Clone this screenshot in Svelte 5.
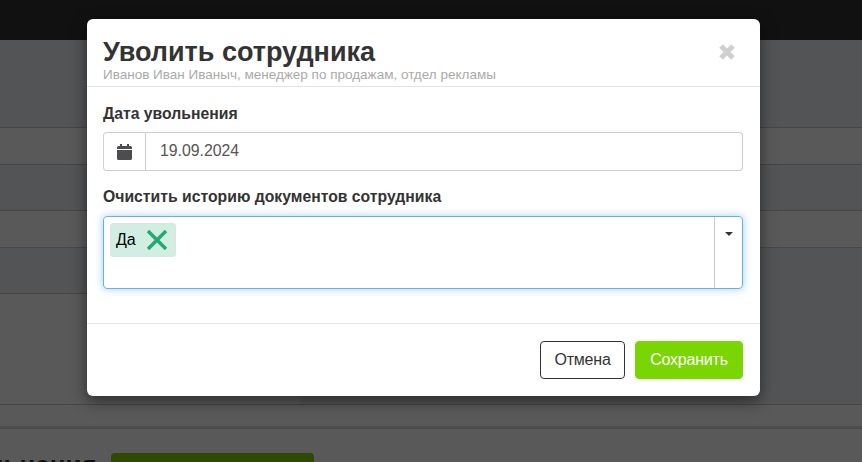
<script>
  let rows = [
    { height: 88, odd: false },
    { height: 37, odd: true },
    { height: 46, odd: false },
    { height: 37, odd: true },
    { height: 46, odd: false, split: true },
    { height: 111, odd: true, merged: true },
    { height: 24, odd: false, last: true }
  ];
  let date = $state('19.09.2024');
</script>

<div class="page">
  <div class="topbar"></div>
  <div class="rows">
    {#each rows as row}
      <div class="row" class:odd={row.odd} class:split={row.split} class:merged={row.merged} class:last={row.last} style="height: {row.height}px"></div>
    {/each}
  </div>
  <div class="section-head">
    <span class="section-title">Увольнения</span>
    <span class="section-btn"></span>
  </div>

  <div class="modal">
    <div class="modal-header">
      <h2>Уволить сотрудника</h2>
      <div class="subtitle">Иванов Иван Иваныч, менеджер по продажам, отдел рекламы</div>
      <span class="close">
        <svg width="18" height="18" viewBox="0 0 18 18"><path d="M3 3l12 12M15 3L3 15" stroke="#cfcfcf" stroke-width="5" fill="none"/></svg>
      </span>
    </div>
    <div class="modal-body">
      <div class="label">Дата увольнения</div>
      <div class="input-group">
        <span class="addon">
          <svg width="15" height="16" viewBox="0 0 15 16">
            <path fill="#4d4d4f" d="M0 6h15v8.500a1.500 1.500 0 0 1-1.500 1.500h-12A1.500 1.500 0 0 1 0 14.500zM1.500 2H3V0h2v2h5V0h2v2h1.500A1.500 1.500 0 0 1 15 3.500V5H0V3.500A1.500 1.500 0 0 1 1.500 2z"/>
          </svg>
        </span>
        <input class="date" bind:value={date} />
      </div>
      <div class="label second">Очистить историю документов сотрудника</div>
      <div class="select">
        <div class="values">
          <span class="tag">
            Да
            <svg width="22" height="22" viewBox="0 0 22 22"><path d="M2 2l18 18M20 2L2 20" stroke="#24a874" stroke-width="3.500" fill="none"/></svg>
          </span>
        </div>
        <div class="arrow"><span class="caret"></span></div>
      </div>
    </div>
    <div class="modal-footer">
      <button class="btn-cancel">Отмена</button>
      <button class="btn-save">Сохранить</button>
    </div>
  </div>
</div>

<style>
  :global(body) {
    margin: 0;
    font-family: "Liberation Sans", Arial, sans-serif;
  }

  .page {
    position: relative;
    width: 862px;
    height: 462px;
    overflow: hidden;
    background: #59595a;
  }

  .topbar {
    height: 40px;
    background: #111111;
  }

  .row {
    box-sizing: border-box;
    background: #535456;
    border-bottom: 1px solid #464647;
  }

  .row.odd {
    background: #59595a;
  }

  /* left part of the table has one more row than the right, merged cell */
  .row.split {
    border-bottom: 0;
    background: linear-gradient(#535456 45px, #464647 45px) left / 300px 100% no-repeat, #535456;
  }

  .row.merged {
    background: linear-gradient(#59595a, #59595a) left / 300px 100% no-repeat, #535456;
  }

  .row.last {
    background: #59595a;
    border-bottom: 3px solid #4d4d4d;
  }

  .section-head {
    display: flex;
    align-items: flex-start;
    gap: 14px;
    margin-top: 24px;
    margin-left: -59px;
  }

  .section-title {
    font-size: 26px;
    font-weight: 700;
    line-height: 30px;
    color: #111;
    margin-top: -3px;
  }

  .section-btn {
    width: 203px;
    height: 40px;
    background: #2e4a00;
    border-radius: 4px;
  }

  .modal {
    position: absolute;
    left: 87px;
    top: 19px;
    width: 673px;
    height: 377px;
    display: flex;
    flex-direction: column;
    background: #fff;
    border-radius: 6px;
    box-shadow: 0 5px 15px rgba(0, 0, 0, 0.5);
  }

  .modal-header {
    position: relative;
    height: 68px;
    box-sizing: border-box;
    padding: 17px 16px 0;
    border-bottom: 1px solid #e5e5e5;
  }

  h2 {
    margin: 0;
    font-size: 27px;
    line-height: 33px;
    font-weight: 700;
    color: #333;
  }

  .subtitle {
    font-size: 13.5px;
    line-height: 14px;
    margin-top: -1px;
    color: #aaa;
  }

  .close {
    position: absolute;
    top: 24px;
    right: 24px;
    line-height: 0;
  }

  .modal-body {
    flex: 1;
    padding: 17px 17px 0 16px;
  }

  .label {
    font-size: 15.75px;
    line-height: 20px;
    font-weight: 700;
    color: #333;
  }

  .label.second {
    margin-top: 16px;
  }

  .input-group {
    display: flex;
    height: 39px;
    margin-top: 8px;
    box-sizing: border-box;
    border: 1px solid #ccc;
    border-left-color: #ccd0da;
    border-radius: 4px;
  }

  .addon {
    width: 41px;
    flex: none;
    display: flex;
    align-items: center;
    justify-content: center;
    border-right: 1px solid #ccc;
  }

  .date {
    flex: 1;
    min-width: 0;
    border: 0;
    outline: 0;
    padding: 0 14px 2px;
    background: none;
    font: 15.8px "Liberation Sans", Arial, sans-serif;
    color: #555;
  }

  .select {
    display: flex;
    height: 73px;
    margin-top: 9px;
    box-sizing: border-box;
    border: 1px solid #66afe9;
    border-radius: 4px;
    box-shadow: 0 0 8px rgba(102, 175, 233, 0.6);
  }

  .values {
    flex: 1;
    padding: 6px;
  }

  .tag {
    display: inline-flex;
    align-items: center;
    gap: 10px;
    height: 34px;
    box-sizing: border-box;
    padding: 0 7px 0 5px;
    background: #d2eee3;
    border: 1px solid #dce5e1;
    border-radius: 3px;
    font-size: 16px;
    color: #000;
  }

  .arrow {
    width: 28px;
    flex: none;
    border-left: 1px solid #ccc;
    display: flex;
    justify-content: center;
    padding-top: 15px;
    box-sizing: border-box;
  }

  .caret {
    width: 0;
    height: 0;
    border: 4px solid transparent;
    border-top-color: #333;
    border-bottom: 0;
  }

  .modal-footer {
    height: 73px;
    box-sizing: border-box;
    display: flex;
    justify-content: flex-end;
    align-items: flex-start;
    gap: 10px;
    padding: 17px 17px 0;
    border-top: 1px solid #e5e5e5;
  }

  button {
    height: 38px;
    border-radius: 4px;
    font: 16px "Liberation Sans", Arial, sans-serif;
    letter-spacing: -0.2px;
    padding: 0;
  }

  .btn-cancel {
    width: 85px;
    background: #fff;
    border: 1px solid #333;
    color: #333;
  }

  .btn-save {
    width: 108px;
    background: #79d600;
    border: 1px solid #79d600;
    color: #fff;
  }
</style>
